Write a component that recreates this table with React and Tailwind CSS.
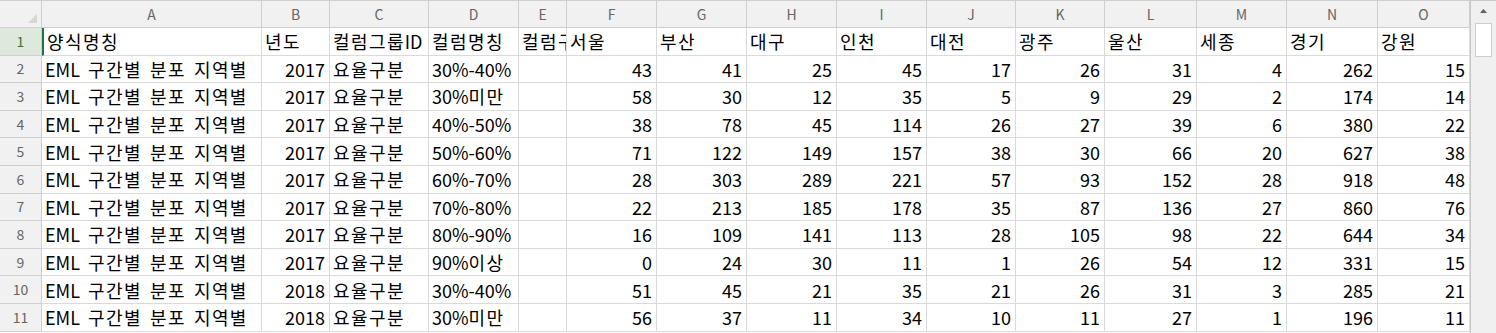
import React from 'react';

const cols = ['A', 'B', 'C', 'D', 'E', 'F', 'G', 'H', 'I', 'J', 'K', 'L', 'M', 'N', 'O'];

const headerRow = ['양식명칭', '년도', '컬럼그룹ID', '컬럼명칭', '컬럼구분', '서울', '부산', '대구', '인천', '대전', '광주', '울산', '세종', '경기', '강원'];

const rows = [
  ['2017', '30%-40%', [43, 41, 25, 45, 17, 26, 31, 4, 262, 15]],
  ['2017', '30%미만', [58, 30, 12, 35, 5, 9, 29, 2, 174, 14]],
  ['2017', '40%-50%', [38, 78, 45, 114, 26, 27, 39, 6, 380, 22]],
  ['2017', '50%-60%', [71, 122, 149, 157, 38, 30, 66, 20, 627, 38]],
  ['2017', '60%-70%', [28, 303, 289, 221, 57, 93, 152, 28, 918, 48]],
  ['2017', '70%-80%', [22, 213, 185, 178, 35, 87, 136, 27, 860, 76]],
  ['2017', '80%-90%', [16, 109, 141, 113, 28, 105, 98, 22, 644, 34]],
  ['2017', '90%이상', [0, 24, 30, 11, 1, 26, 54, 12, 331, 15]],
  ['2018', '30%-40%', [51, 45, 21, 35, 21, 26, 31, 3, 285, 21]],
  ['2018', '30%미만', [56, 37, 11, 34, 10, 11, 27, 1, 196, 11]],
];

const gridCols =
  'grid grid-cols-[42px_220px_68px_99px_90px_48px_90px_90px_90px_90px_89px_89px_92px_90px_91px_92px]';

// Malgun Gothic sets hangul a little wider than Noto CJK, so space the hangul runs out
function Wide({ text }) {
  if (typeof text !== 'string') return <span>{text}</span>;
  const parts = text.split(/([\uAC00-\uD7A3]+)/);
  return (
    <span>
      {parts.map((p, i) =>
        /[\uAC00-\uD7A3]/.test(p) ? (
          <span key={i} className="tracking-[1.4px]">
            {p}
          </span>
        ) : (
          p
        )
      )}
    </span>
  );
}

function Cell({ children, right, selected }) {
  return (
    <div
      className={`h-[27.6px] border-r border-b border-[#dadada] bg-white flex items-center overflow-hidden whitespace-pre text-[18px] text-black leading-none [word-spacing:4px] ${
        right ? 'justify-end pr-[4px]' : 'pl-[3px]'
      } ${selected ? 'border-l-2 border-l-[#217346] pl-[1px]' : ''}`}
    >
      <Wide text={children} />
    </div>
  );
}

function RowHead({ n, selected }) {
  return (
    <div
      className={`h-[27.6px] border-r border-b border-[#cfcfcf] flex items-center justify-center text-[14px] ${
        selected ? 'bg-[#dde9da] text-[#3b6e3b]' : 'bg-[#f1f1f1] text-[#666]'
      }`}
    >
      {n}
    </div>
  );
}

export default function App() {
  return (
    <div
      className="flex w-[1496px] h-[333px] overflow-hidden bg-white"
      style={{ fontFamily: '"Noto Sans CJK KR", "Noto Sans", sans-serif' }}
    >
      <div className="w-[1470px] shrink-0">
        <div className={gridCols}>
          {/* corner */}
          <div className="h-[28px] bg-[#f1f1f1] border-r border-b border-t border-[#cfcfcf] relative">
            <svg className="absolute right-[4px] bottom-[4px]" width="9" height="9" viewBox="0 0 9 9">
              <polygon points="9,0 9,9 0,9" fill="#d6d6d6" />
            </svg>
          </div>
          {cols.map((c) => (
            <div
              key={c}
              className="h-[28px] bg-[#f1f1f1] border-r border-b border-t border-[#cfcfcf] flex items-center justify-center text-[14px] text-[#666]"
            >
              {c}
            </div>
          ))}

          <RowHead n={1} selected />
          {headerRow.map((h, i) => (
            <Cell key={h} selected={i === 0}>
              {h}
            </Cell>
          ))}

          {rows.map(([year, name, nums], r) => (
            <React.Fragment key={r}>
              <RowHead n={r + 2} />
              <Cell>EML 구간별 분포 지역별</Cell>
              <Cell right>{year}</Cell>
              <Cell>요율구분</Cell>
              <Cell>{name}</Cell>
              <Cell></Cell>
              {nums.map((v, k) => (
                <Cell key={k} right>
                  {v}
                </Cell>
              ))}
            </React.Fragment>
          ))}
        </div>
      </div>

      {/* vertical scrollbar */}
      <div className="w-[26px] shrink-0 bg-[#f0f0f0] border-l border-[#c8c8c8] border-t flex flex-col items-center">
        <div className="h-[20px] flex items-center justify-center">
          <svg width="7" height="4" viewBox="0 0 7 4">
            <polygon points="3.5,0 7,4 0,4" fill="#606060" />
          </svg>
        </div>
        <div className="w-[17px] h-[34px] bg-white border border-[#cdcdcd] mt-[2px]" />
      </div>
    </div>
  );
}
